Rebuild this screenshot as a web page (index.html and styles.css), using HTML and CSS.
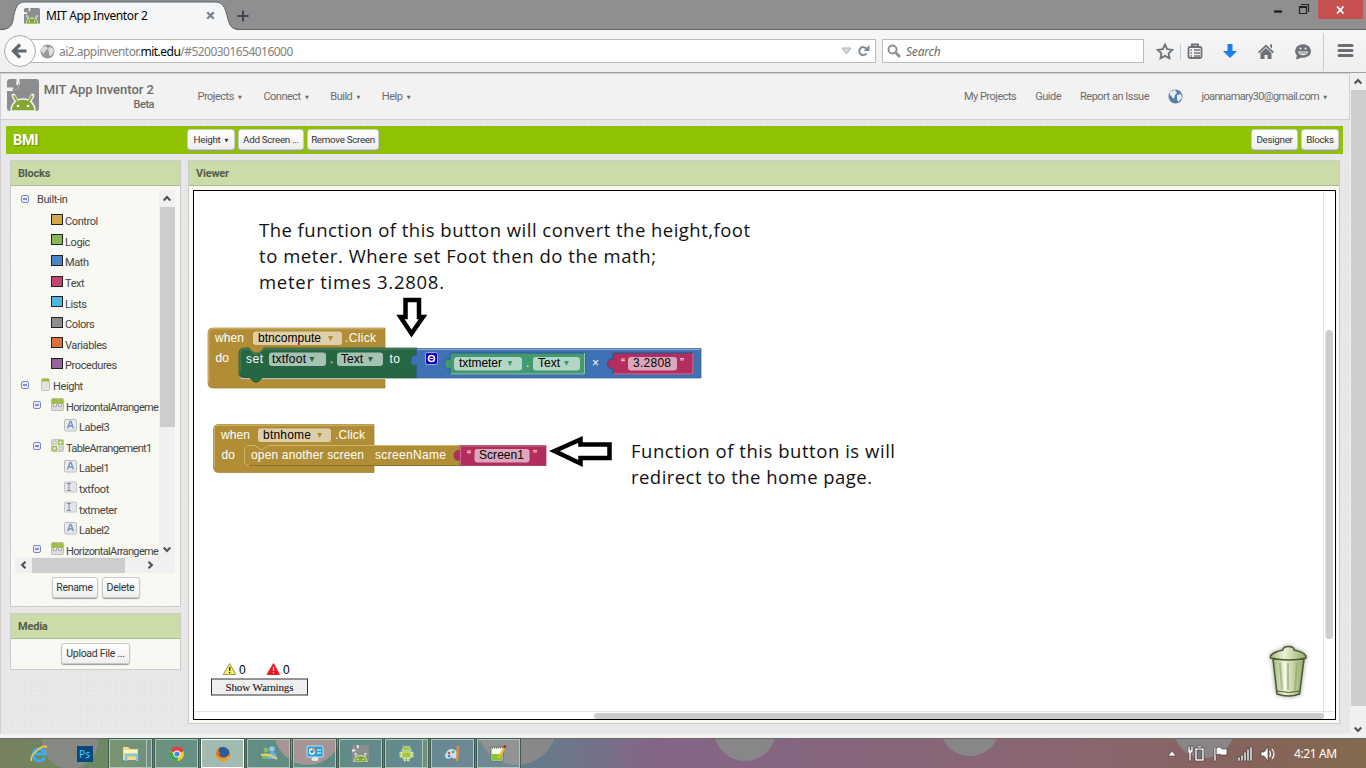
FILE: index.html
```html
<!DOCTYPE html>
<html lang="en">
<head>
<meta charset="utf-8">
<title>MIT App Inventor 2</title>
<link rel="stylesheet" href="styles.css">
</head>
<body>
<svg class="defs" width="0" height="0">
  <symbol id="logo" viewBox="0 0 32 32">
    <rect width="32" height="32" rx="3" fill="#8b8d8f"/>
    <path d="M0 8.500h3.500a2 2 0 1 1 0 3.500H0zM9.500 0v3a2 2 0 1 0 3 0V0z" fill="#f1f1f1"/>
    <path d="M5 10.500h6.500V4" stroke="#a4a6a7" fill="none"/>
    <path d="M9.500 22.500l-3-6M22.500 22.500l3-6" stroke="#f1f1f1" stroke-width="4" stroke-linecap="round"/>
    <path d="M4 32c0-7 5-12 12-12s12 5 12 12z" fill="#83a832" stroke="#f1f1f1" stroke-width="1.500"/>
    <path d="M10 22.500l-3.200-6M22 22.500l3.200-6" stroke="#83a832" stroke-width="1.800"/>
    <circle cx="11" cy="27" r="1.300" fill="#fff"/><circle cx="21" cy="27" r="1.300" fill="#fff"/>
  </symbol>
  <symbol id="minus" viewBox="0 0 8 8"><rect x=".5" y=".5" width="7" height="7" rx="1.500" fill="#eef0ff" stroke="#7a86c4"/><path d="M2 4h4" stroke="#4d55cf" stroke-width="1.300"/></symbol>
  <symbol id="harr" viewBox="0 0 13 13"><rect x=".5" y=".5" width="12" height="12" rx="1" fill="#ddd" stroke="#bbb"/><path d="M1 1h11v5H1z" fill="#9cc238"/><path d="M2.500 5.500h3v3h-3zM7.500 5.500h3v3h-3z" fill="#eee" stroke="#aaa"/></symbol>
  <symbol id="tarr" viewBox="0 0 13 13"><rect x=".5" y=".5" width="12" height="12" rx="1" fill="#e2e4dc" stroke="#c4c8ba"/><path d="M7 1h5v5H7zM1 7h5v5H1z" fill="#9cc238"/><path d="M2 2h3v3H2zM8 2h3v3H8zM2 8h3v3H2zM8 8h3v3H8z" fill="#f3f3f3" stroke="#aaa" stroke-width=".8"/></symbol>
  <symbol id="lab" viewBox="0 0 13 13"><rect x=".5" y=".5" width="12" height="11.500" rx="1.500" fill="#e8e9ec" stroke="#bbb"/><path d="M3.500 9.500l2.500-7h1l2.500 7M4.500 7h4" fill="none" stroke="#6d93c4" stroke-width="1.300"/></symbol>
  <symbol id="tbx" viewBox="0 0 13 13"><rect x=".5" y="1" width="12" height="10" rx="1" fill="#e4e5e6" stroke="#c5c5c5"/><path d="M3 2.500h4M3 9.500h4M5 2.500v7" fill="none" stroke="#7d8ba8"/></symbol>
  <symbol id="up" viewBox="0 0 16 16"><path d="M4.700 10L8 6.600 11.300 10" fill="none" stroke="#505050" stroke-width="2.100"/></symbol>
</svg>

<header class="tabbar">
  <svg class="tab-shape" width="250" height="31"><path d="M0 30C15 30 12 20 15 11C17 4 20 2 25 2H214C221 2 224 5 226 12C229 21 228 30 240 30V31H0z" fill="#f5f6f7"/><path d="M0 29.500C15 29.500 12 20 15 11C17 4 20 2 25 2H214C221 2 224 5 226 12C229 21 228 29.500 240 29.500H250" fill="none" stroke="#5c646c"/></svg>
  <div class="tab">
    <svg width="16" height="16"><use href="#logo"/></svg>
    <span class="tab-title">MIT App Inventor 2</span>
    <svg width="9" height="9"><path d="M1.200 1.200l6.600 6.600M7.800 1.200l-6.600 6.600" stroke="#76828f" stroke-width="2.200"/></svg>
  </div>
  <svg class="plus" width="12" height="12"><path d="M6 .5v11M.5 6h11" stroke="#3b4752" stroke-width="2"/></svg>
  <div class="window-controls">
    <svg width="40" height="19"><path d="M1 11.500h8" stroke="#222" stroke-width="2.400"/><path d="M26.500 6.500h7v7h-7zM28 4.500h7.500V12" fill="none" stroke="#222" stroke-width="1.200"/><path d="M26 7h8" stroke="#222" stroke-width="2"/></svg>
    <div class="close"><svg width="9" height="8"><path d="M1 .5l6.500 7M7.500 .5L1 7.500" stroke="#fff" stroke-width="1.800"/></svg></div>
  </div>
</header>

<nav class="toolbar">
  <div class="back"><svg width="18" height="16"><path d="M9 1.500L2.500 8 9 14.500M3 8H15.500" fill="none" stroke="#5f666c" stroke-width="3.200"/></svg></div>
  <div class="url">
    <svg width="15" height="15"><circle cx="7.500" cy="7.500" r="7" fill="#999"/><path d="M2 3l4-1 2 3-3 2-1 3-3-3zM9 3l4 1 1 4-3 4-2-1V8L8 6z" fill="#dedede"/></svg>
    <span class="address">ai2.appinventor.<b>mit.edu</b>/#5200301654016000</span>
    <svg class="url-icons" width="30" height="14"><path d="M1 4h9l-4.500 6z" fill="#d4dae0" stroke="#a6b0b9"/><path d="M25.500 9.500A4 4 0 1 1 25.300 4.500" fill="none" stroke="#7d8c99" stroke-width="2"/><path d="M28.500 1v6h-6z" fill="#7d8c99"/></svg>
  </div>
  <div class="search"><svg width="14" height="14"><circle cx="5.500" cy="5.500" r="4" fill="none" stroke="#8e8e8e" stroke-width="1.900"/><path d="M8.500 8.500l4.500 4.500" stroke="#8e8e8e" stroke-width="2.600"/></svg><i>Search</i></div>
  <svg class="tool-icons" width="209" height="42" fill="#6d7278">
    <path d="M16 14.500l2.200 4.700 5.100.6-3.700 3.500.9 5.100-4.500-2.500-4.500 2.500.9-5.100-3.700-3.500 5.100-.6z" fill="none" stroke="#6d7278" stroke-width="1.800"/>
    <path d="M31.500 14v16" stroke="#c5ced8"/>
    <rect x="39.500" y="17" width="13" height="11" rx="1.500" fill="#f4f4f4" stroke="#6d7278" stroke-width="1.800"/><path d="M43 16.500v-2h6v2" stroke="#6d7278" stroke-width="2" fill="none"/><path d="M41.500 20h1.500M45 20h6M41.500 23h1.500M45 23h6M41.500 26h1.500M45 26h6" stroke="#6d7278" stroke-width="1.500"/>
    <path d="M78.500 14h5v7H88l-7 7-7-7h4.500z" fill="#1880e8"/>
    <path d="M109 22l8-7.500 8 7.500-1.200 1.200L117 17l-6.800 6.200zM111.500 23l5.500-5 5.500 5v6h-4v-4h-3v4h-4zM121 14.500h2v4l-2-2z"/>
    <ellipse cx="154" cy="21" rx="8" ry="6.800"/><path d="M148 25l-1 4.500 6-2z"/><path d="M149 21.500c.7 5 9.300 5 10 0z" fill="#f4f4f4"/><path d="M150.500 23h7" stroke="#6d7278" stroke-width="1"/><circle cx="151.500" cy="18.500" r="1" fill="#f4f4f4"/><circle cx="156.500" cy="18.500" r="1" fill="#f4f4f4"/>
    <path d="M174.500 3v38" stroke="#c5ced8"/>
    <path d="M190 15.500h13M190 20.500h13M190 25.500h13" stroke="#6a6e73" stroke-width="3" stroke-linecap="round"/>
  </svg>
</nav>

<div class="viewport">
<main class="page">
  <div class="appbar">
    <svg class="applogo" width="32" height="32"><use href="#logo"/></svg>
    <div class="brand"><div class="brand-name">MIT App Inventor 2</div><div class="beta">Beta</div></div>
    <div class="menus"><span>Projects <em>▼</em></span><span>Connect <em>▼</em></span><span>Build <em>▼</em></span><span>Help <em>▼</em></span></div>
    <div class="links"><span>My Projects</span><span>Guide</span><span>Report an Issue</span><svg width="15" height="15"><circle cx="7.500" cy="7.500" r="7" fill="#5b7fa8"/><path d="M2 3l5-2 2 3-2 2-1 4-4-4zM9 6l4-1 1 4-4 4-1-3z" fill="#e5ebf2"/></svg><span class="mail">joannamary30@gmail.com <em>▼</em></span></div>
  </div>
  <div class="projectbar">
    <div class="project">BMI</div>
    <div class="btn b1">Height&nbsp;<em>▼</em></div><div class="btn b2">Add Screen ...</div><div class="btn b3">Remove Screen</div>
    <div class="btn b4">Designer</div><div class="btn b5">Blocks</div>
  </div>
  <div class="columns">
    <aside class="side">
      <section class="box blocks">
        <h2>Blocks</h2>
        <div class="tree-area">
          <div class="tree">
            <div class="row first"><svg width="8" height="8"><use href="#minus"/></svg><span class="root">Built-in</span></div>
            <div class="row leaf"><i class="sw gold"></i>Control</div>
            <div class="row leaf"><i class="sw green"></i>Logic</div>
            <div class="row leaf"><i class="sw blue"></i>Math</div>
            <div class="row leaf"><i class="sw pink"></i>Text</div>
            <div class="row leaf"><i class="sw sky"></i>Lists</div>
            <div class="row leaf"><i class="sw gray"></i>Colors</div>
            <div class="row leaf"><i class="sw orange"></i>Variables</div>
            <div class="row leaf"><i class="sw purple"></i>Procedures</div>
            <div class="row"><svg class="tog" width="8" height="8"><use href="#minus"/></svg><svg class="phone" width="9" height="13"><rect x=".5" y=".5" width="8" height="12" rx="1" fill="#e3e3e0" stroke="#c4c4c0"/><path d="M1 1h7v2.500H1z" fill="#9cbf3a"/></svg>Height</div>
            <div class="row in1"><svg class="tog" width="8" height="8"><use href="#minus"/></svg><svg class="ic" width="13" height="13"><use href="#harr"/></svg><span class="tight">HorizontalArrangeme</span></div>
            <div class="row in2"><svg class="ic" width="13" height="13"><use href="#lab"/></svg>Label3</div>
            <div class="row in1"><svg class="tog" width="8" height="8"><use href="#minus"/></svg><svg class="ic" width="13" height="13"><use href="#tarr"/></svg><span class="tight">TableArrangement1</span></div>
            <div class="row in2"><svg class="ic" width="13" height="13"><use href="#lab"/></svg>Label1</div>
            <div class="row in2"><svg class="ic" width="13" height="13"><use href="#tbx"/></svg>txtfoot</div>
            <div class="row in2"><svg class="ic" width="13" height="13"><use href="#tbx"/></svg>txtmeter</div>
            <div class="row in2"><svg class="ic" width="13" height="13"><use href="#lab"/></svg>Label2</div>
            <div class="row in1"><svg class="tog" width="8" height="8"><use href="#minus"/></svg><svg class="ic" width="13" height="13"><use href="#harr"/></svg><span class="tight">HorizontalArrangeme</span></div>
          </div>
          <div class="vbar"><svg width="16" height="17"><use href="#up"/></svg><div class="thumb tree-thumb"></div><svg class="down" width="16" height="17"><use href="#up"/></svg></div>
        </div>
        <div class="hbar"><svg class="left" width="17" height="16"><use href="#up"/></svg><div class="thumb wide"></div><svg class="right" width="17" height="16"><use href="#up"/></svg></div>
        <div class="actions"><div class="btn r1">Rename</div><div class="btn r2">Delete</div></div>
      </section>
      <section class="box media"><h2>Media</h2><div class="actions"><div class="btn r3">Upload File ...</div></div></section>
    </aside>
    <section class="box viewer">
      <h2>Viewer</h2>
      <svg class="canvas" width="1143" height="530" viewBox="193 190 1143 530">
        <rect x="193.500" y="190.500" width="1142" height="529" fill="#fff" stroke="#000"/>
        <path d="M1323.500 192V718M195 711.500H1334" stroke="#e4e4e4"/>
        <rect x="1325.500" y="330" width="7.500" height="309" rx="3.500" fill="#ccc"/><rect x="594" y="713" width="730" height="6" rx="3" fill="#ccc"/>
        <g class="note">
          <text x="259" y="237" textLength="491">The function of this button will convert the height,foot</text>
          <text x="259" y="263" textLength="397">to meter. Where set Foot then do the math;</text>
          <text x="259" y="289" textLength="185">meter times 3.2808.</text>
          <text x="631" y="458" textLength="264">Function of this button is will</text>
          <text x="631" y="484" textLength="241">redirect to the home page.</text>
        </g>
        <path d="M405.500 300h13.500v17h4L411.500 333.500 400.500 317h5z" fill="#fff" stroke="#000" stroke-width="4.500"/>
        <path d="M554.500 451L580.500 439.500v5h29V458h-29v5.500z" fill="#fff" stroke="#000" stroke-width="4.500"/>

        <path d="M208 333Q208 328 213 328H385V348H263L259 353H254L250 348H245Q239 348 239 353V374Q239 379.500 245 379.500H385V388H213Q208 388 208 383z" fill="#b18e35" stroke="#a08030" stroke-width=".7"/>
        <path d="M208.800 383V333Q209 328.800 213 328.800H384.500" fill="none" stroke="#d0b76d"/>
        <path d="M239 353Q239 348 245 348H249L254 353H259L264 348H417V378H262l-4 4h-4l-4-4h-5Q239 378 239 373z" fill="#266643" stroke="#1d5033" stroke-width=".7"/>
        <path d="M240 373V353Q240 349 245 349H249L254 354H259L264 349H417" fill="none" stroke="#5e8f72" stroke-width=".8"/>
        <path d="M416.500 348.500H701V378H416.500V364C412 368 411 362 411 360S413 354 416.500 356z" fill="#3f71b5" stroke="#315b94" stroke-width=".7"/>
        <path d="M417 349.500H700" stroke="#8aabd8"/>
        <rect x="425.500" y="352.500" width="12" height="12" rx="2" fill="#1100c4" stroke="#9caaf0"/><circle cx="431.500" cy="358.500" r="3" fill="none" stroke="#fff" stroke-width="1.600"/><path d="M430 358.500h3" stroke="#fff"/>
        <path d="M450 353H585V374.500H450V368C446 370 444.500 366 444.500 363.500S447 357 450 360z" fill="#439970" stroke="#2a5a91"/>
        <path d="M450.500 374H584.500V353" fill="none" stroke="#95c9b0"/>
        <path d="M613 353H693.500V374.500H613V368C609 370 607.500 366 607.500 363.500S610 357 613 360z" fill="#b32d5e" stroke="#264e87"/>
        <path d="M613.500 374H693V353" fill="none" stroke="#d5839f"/>
        <rect class="tan" x="253" y="331.500" width="89" height="13.500" rx="3"/><rect class="dark" x="269" y="352.500" width="57" height="13.500" rx="3"/><rect class="dark" x="337" y="352.500" width="46" height="13.500" rx="3"/>
        <rect class="mint" x="454" y="357" width="68" height="13.500" rx="3"/><rect class="mint" x="533" y="357" width="47" height="13.500" rx="3"/><rect class="rose" x="628" y="357" width="49" height="13.500" rx="3"/>
        <g class="code light">
          <text x="215" y="342" textLength="29">when</text><text x="345" y="342" textLength="31">.Click</text><text x="215.500" y="362" textLength="13.500">do</text><text x="246" y="363" textLength="17">set</text><text x="330" y="363">.</text><text x="389.500" y="363" textLength="10.500">to</text><text x="526" y="367">.</text><text x="592" y="367">×</text><text x="621" y="367">“</text><text x="680" y="367">”</text>
        </g>
        <g class="code">
          <text x="258" y="342" textLength="63">btncompute</text><text x="272" y="363" textLength="34">txtfoot</text><text x="341" y="363" textLength="22">Text</text><text x="459" y="367" textLength="43">txtmeter</text><text x="538" y="367" textLength="22">Text</text><text x="633" y="367" textLength="38">3.2808</text>
        </g>
        <path d="M328 336h5l-2.500 5z" fill="#b18e35"/><path d="M309.500 357h5l-2.500 5zM368 357h5l-2.500 5z" fill="#266643"/><path d="M507.500 361h5l-2.500 5zM564 361h5l-2.500 5z" fill="#439970"/>

        <path d="M213.500 430Q213.500 424.500 219 424.500H374V472.500H219Q213.500 472.500 213.500 467z" fill="#b18e35" stroke="#a08030" stroke-width=".7"/>
        <path d="M214.300 467V430Q214.500 425.300 219 425.300H373.500" fill="none" stroke="#d0b76d"/>
        <path d="M244.500 450Q244.500 445.500 249 445.500H255l5 4h3l5-4H460V465.500H249Q244.500 465.500 244.500 461z" fill="#b18e35"/>
        <path d="M460 465.500H249Q244.500 465.500 244.500 461V450Q244.500 445.500 249 445.500H255l5 4h3l5-4H460" fill="none" stroke="#cdb56e"/><path d="M460 465.500H249" stroke="#8c6f29"/>
        <path d="M460 445.500H546V465.500H460V459C455 463 454 456 454 454.500S456 449 460 451z" fill="#b32d5e" stroke="#97284f" stroke-width=".7"/>
        <path d="M460.500 465V446H546" fill="none" stroke="#d07c99" stroke-width=".8"/>
        <rect class="tan" x="258" y="428.500" width="73" height="13.500" rx="3"/><rect class="rose" x="474.500" y="449" width="55" height="13.500" rx="3"/>
        <g class="code light"><text x="221" y="439" textLength="29">when</text><text x="335" y="439" textLength="30">.Click</text><text x="221.500" y="459" textLength="13.500">do</text><text x="251" y="459" textLength="113">open another screen</text><text x="375" y="459" textLength="71">screenName</text><text x="467" y="459">“</text><text x="533" y="459">”</text></g>
        <g class="code"><text x="263" y="439" textLength="48">btnhome</text><text x="479" y="459" textLength="45">Screen1</text></g>
        <path d="M317 433h5l-2.500 5z" fill="#b18e35"/>

        <path d="M229.700 663.500l6 11h-12.500z" fill="#f5f06a" stroke="#9a9840"/><path d="M229.700 667v4M229.700 672v1.300" stroke="#222" stroke-width="1.300"/>
        <path d="M273.500 663.500l6 11h-12.500z" fill="#f60c18" stroke="#e03030"/><path d="M273.500 667v4M273.500 672v1.300" stroke="#fff" stroke-width="1.300"/>
        <text class="count" x="239" y="674">0</text><text class="count" x="283" y="674">0</text>
        <rect x="211.500" y="679" width="96" height="16" fill="#efefef" stroke="#333"/><text class="warn" x="225.500" y="691" textLength="68">Show Warnings</text>
        <g class="trash">
          <path d="M1273 659h31l-4.500 35Q1289 698 1277 694z" fill="url(#can)" stroke="#4c5a33" stroke-width="1.500"/>
          <path d="M1270.500 656Q1273 652 1283 650Q1283 646.500 1288.500 646.500T1294 650Q1304 652 1306 656V658Q1289 662 1270.500 658z" fill="url(#can)" stroke="#4c5a33" stroke-width="1.500"/>
          <path d="M1280 663l2 27M1288 663v27M1297 663l-2 27" stroke="#8fa468" stroke-width="2" opacity=".6"/><path d="M1284.500 663l1 27" stroke="#f7fae9" stroke-width="2"/><path d="M1277 691q12 3 23 0" fill="none" stroke="#4c5a33"/>
        </g>
        <defs><linearGradient id="can"><stop offset="0" stop-color="#a3b87c"/><stop offset=".38" stop-color="#edf2d8"/><stop offset="1" stop-color="#93aa68"/></linearGradient></defs>
      </svg>
    </section>
  </div>
</main>
<div class="vbar page-scroll"><svg width="16" height="17"><use href="#up"/></svg><div class="thumb page-thumb"></div><svg class="down" width="16" height="17"><use href="#up"/></svg></div>
</div>

<footer class="taskbar">
  <svg class="bubbles" width="1366" height="30"><g fill="#898989" fill-opacity=".9"><circle cx="70" cy="2" r="28"/><circle cx="745" cy="-9" r="31"/><circle cx="970" cy="-13" r="30"/><circle cx="1204" cy="-12" r="31"/><circle cx="517" cy="-14" r="40"/><circle cx="308" cy="-8" r="34" fill="#a58b8b"/></g></svg>
  <div class="task bare"><svg width="18" height="18"><path d="M14.500 12.500A6 6 0 1 1 15 9H5" fill="none" stroke="#3eaeea" stroke-width="3"/><path d="M1.500 16C-1 11 12-1 17 2" fill="none" stroke="#f4cc45" stroke-width="1.600"/></svg></div>
  <div class="task bare"><div class="ps">Ps</div></div>
  <div class="task multi"><svg width="18" height="16"><path d="M1 1h5l2 2h8v11H1z" fill="#f3dc83"/><path d="M2 4h13v3H2z" fill="#fff6c4"/><path d="M4 15V9h11v6" fill="none" stroke="#82c5e8" stroke-width="2.500"/></svg></div>
  <div class="task"><svg width="16" height="16"><circle cx="8" cy="8" r="7" fill="#f7c928"/><path d="M8 8L1.500 5A7 7 0 0 1 14.500 5z" fill="#db4437"/><path d="M1.600 5A7 7 0 0 0 8 15l2-5-5-1z" fill="#36a853"/><circle cx="8" cy="8" r="3.500" fill="#fff"/><circle cx="8" cy="8" r="2.600" fill="#4486ee"/></svg></div>
  <div class="task active"><svg width="16" height="16"><circle cx="8" cy="8" r="7" fill="#e56a20"/><path d="M4 2Q10-1 14 5Q15 9 11 11Q5 12 4 8l2-1-2-1z" fill="#235d9e"/><path d="M1 5q1 8 8 7 4-1 4-3 3 2-1 5-5 3-9-1Q1 10 1 5z" fill="#f49a27"/></svg></div>
  <div class="task"><svg width="18" height="18"><circle cx="6" cy="5" r="2.500" fill="#86bd65"/><circle cx="12" cy="4" r="2.800" fill="#8cc9f0"/><path d="M2 14q0-7 5-6 4 0 5 6z" fill="#7cba5f"/><path d="M8 14q0-8 5-7 4 1 4 7z" fill="#6ab4e8"/><path d="M1 10q9-1 16 4" stroke="#f0cb67" stroke-width="2" fill="none"/></svg></div>
  <div class="task"><svg width="18" height="17"><rect x="1" y="1" width="16" height="11" rx="1" fill="#319adc" stroke="#b9e4f8"/><circle cx="6" cy="6.500" r="2.500" fill="none" stroke="#fff" stroke-width="1.300"/><path d="M6 4a2.500 2.500 0 0 1 2.500 2.500" stroke="#ef9a30" fill="none" stroke-width="1.400"/><path d="M11 5h4M11 8h4" stroke="#fff"/><ellipse cx="9" cy="14" rx="3.500" ry="2" fill="#e4e6e6"/></svg></div>
  <div class="task"><svg width="17" height="17"><use href="#logo"/></svg></div>
  <div class="task multi"><svg width="15" height="17" fill="#a2c73e" stroke="#e6efd1" stroke-width=".7"><path d="M3 6a4.500 4.500 0 0 1 9 0zM3 7h9v6H3zM1 7h1.500v5H1zM12.500 7H14v5h-1.500zM5 13h1.700v3H5zM8.500 13h1.700v3H8.500zM5 2L4 .5M10 2l1-1.500"/></svg></div>
  <div class="task"><svg width="17" height="17"><path d="M2 8Q5 2 11 5q5 4 1 8-3 2-4-1-3 3-6 1-2-2 0-5z" fill="#c6dff0"/><circle cx="5" cy="8" r="1.300" fill="#e14d35"/><circle cx="9" cy="7" r="1.300" fill="#58a648"/><circle cx="5" cy="11" r="1.300" fill="#4f78c7"/><path d="M14 1l-1 15" stroke="#dc9145" stroke-width="2.400"/></svg></div>
  <div class="task"><svg width="17" height="17"><path d="M1 2h12v14H1z" fill="#f6fcee" stroke="#637055"/><path d="M2 9h10v6H2z" fill="#82c72f"/><path d="M2 3h10" stroke="#444" stroke-dasharray="1 1"/><path d="M15 2L9 12l-1 1" stroke="#e9be2b" stroke-width="2.400"/><path d="M14 3l1.500-2.500" stroke="#b12a22" stroke-width="2.600"/></svg></div>
  <svg class="tray" width="112" height="22" fill="#fff" stroke="#333" stroke-width=".6"><path d="M1 13h8L5 8z"/><path d="M28 5h9v13h-9zM30 3h5v2h-5zM21 3h2v4h1V3h2v6l-2 1v8h-2v-8l-1-1z"/><path d="M30 7h5v9h-5z" fill="#787878"/><path d="M47 4h2v14h-2zM49 5q3-2 5 0l1 1h5v6h-6q-2-2-5 0z"/><path d="M71 14h2v4h-2zM74 12h2v6h-2zM77 9h2v9h-2zM80 6h2v12h-2zM83 4h2v14h-2z"/><path d="M94 9h3l4-5v14l-4-5h-3z"/><path d="M102.500 8q2 3 0 6M105 6q4 5 0 10" fill="none" stroke="#fff" stroke-width="1.200"/></svg>
  <time>4:21 AM</time>
</footer>
</body>
</html>
```
FILE: styles.css
```css
*{box-sizing:border-box}
body{margin:0;width:1366px;height:768px;overflow:hidden;display:flex;flex-direction:column;font-family:Roboto,"Liberation Sans",sans-serif;font-size:11px;color:#444;background:#f2f2f2}
svg{display:block;flex:none}
.defs{position:absolute}
em{font-style:normal;font-family:"DejaVu Sans",sans-serif;font-size:5px;letter-spacing:0;vertical-align:1px;margin-left:2px}
.tabbar{height:30px;flex:none;background:#8f8f8f;border-bottom:1px solid #5c646c;display:flex;position:relative}
.tab-shape{position:absolute;left:0;top:0}
.tab{position:relative;width:236px;height:31px;padding:0 21px 0 24px;display:flex;align-items:center;font-family:"Noto Sans",sans-serif;font-size:12px;color:#000}
.tab-title{margin-left:6px;flex:1;letter-spacing:-.4px;white-space:nowrap}
.plus{margin:10px 0 0 1px}
.window-controls{margin-left:auto;display:flex;margin-right:3px}
.window-controls>svg{margin-right:5px}
.close{width:45px;height:19px;background:#c75050;display:flex;align-items:center;justify-content:center}
.toolbar{height:43px;flex:none;background:linear-gradient(#f6f6f6,#efefef);border-bottom:1px solid #a0a0a0;display:flex;align-items:center;font-family:"Noto Sans",sans-serif}
.back{width:32px;height:32px;border:1px solid #aaa;border-radius:50%;margin-left:4px;background:#fafafa;display:flex;align-items:center;justify-content:center;position:relative;z-index:1}
.url{width:848px;height:24px;background:#fff;border:1px solid #b5bdc5;margin-left:-8px;padding-left:11px;display:flex;align-items:center;font-size:12px;color:#808080}
.address{margin-left:4px;letter-spacing:-.53px;white-space:nowrap}
.address b{font-weight:400;color:#000}
.url-icons{margin-left:auto;margin-right:4px}
.search{width:262px;height:24px;margin-left:6px;background:#fff;border:1px solid #b5bdc5;display:flex;align-items:center;padding-left:4px;font-size:12px;color:#6b6b6b}
.search i{margin-left:5px;letter-spacing:-.2px}
.tool-icons{margin-left:5px}
.viewport{height:665px;flex:none;display:flex}
.page{width:1350px;height:661px;background-color:#e7e7e7;background-image:radial-gradient(#e2e2e2 1px,transparent 1px),radial-gradient(#ebebeb 1px,transparent 1px);background-size:7px 5px,5px 7px;border-left:1px solid #d0d0d0}
.appbar{height:47px;background:#f2f2f2;border:1px solid #cfcfcf;border-left:0;display:flex;color:#6c6c6c;letter-spacing:-.5px}
.applogo{margin:5px 0 0 6px}
.brand{width:111px;margin:8px 0 0 4px;text-align:right;font-weight:500}
.brand-name{font-size:13px;line-height:16px;letter-spacing:0;white-space:nowrap}
.beta{font-size:11px;line-height:14px}
.menus{display:flex;gap:21.5px;margin:16px 0 0 43.5px;line-height:14px}
.links{display:flex;gap:19px;margin:16px 22px 0 auto;line-height:14px}
.links span:nth-child(-n+3){position:relative;left:2.500px}
.links>svg{margin:-1px -.5px 0 2.500px}
.mail{letter-spacing:-.64px}
.projectbar{height:28px;width:1337px;background:#8fc202;margin:6px 0 6px 5px;display:flex;align-items:center;padding:0 4px 1px 7px}
.project{width:174px;color:#fff;font-weight:700;font-size:14.5px;padding-top:2px;letter-spacing:-.3px;text-shadow:1px 1px 1px #6b9100}
.btn{height:21px;border:1px solid #c9c9c9;border-radius:3px;background:linear-gradient(#fff,#efefef);box-shadow:0 1px 1px #999;display:flex;align-items:center;justify-content:center;font-size:10.5px;color:#333;letter-spacing:-.3px;white-space:nowrap}
.projectbar .btn{margin-right:3px;font-size:9.800px;letter-spacing:-.3px}
.b1{width:48px}.b2{width:66px}.b3{width:72px}.b4{width:47px;margin-left:auto}.b5{width:38px}
.projectbar .b5{margin-right:0}
.columns{display:flex;gap:7px;padding-left:9px}
.side{width:171px}
.box{border:1px solid #ccc;background:#f8f9f2}
.box h2{margin:0;height:25px;background:#cbdca8;border-bottom:1px solid #adbb95;font-size:11px;font-weight:700;line-height:25px;padding-left:7px;color:#535c4a;letter-spacing:-.2px}
.blocks{height:447px;margin-bottom:6px}
.media{height:57px}
.tree-area{height:372px;padding:4px 5px 0 4px;display:flex}
.tree{width:144px;height:368px;overflow:hidden;letter-spacing:-.4px;color:#444}
.tight{letter-spacing:-.64px}
.row{height:20.6px;display:flex;align-items:center;padding-left:6px;white-space:nowrap}
.row.first{height:19px;margin-bottom:2.500px;padding-bottom:1px}
.root{margin-left:8px}
.leaf{padding-left:35px}
.sw{width:12px;height:11px;border:1px solid #222;margin:-5px 2px 0 1px}
.gold{background:#d0a94a}.green{background:#82b855}.blue{background:#4a85c5}.pink{background:#c44372}.sky{background:#52b5df}.gray{background:#8e8e8e}.orange{background:#dc713a}.purple{background:#926498}
.tog{margin-top:-4px}
.phone{margin:-5px 3px 0 12px}
.in1{padding-left:18px}
.in1 .ic{margin:-5px 2px 0 10px}
.in2{padding-left:49px}
.ic{margin:-5px 2px 0 0}
.vbar{width:16px;background:#f0f0f0;display:flex;flex-direction:column;align-items:center}
.thumb{background:#cdcdcd}
.tree-thumb{width:15px;height:220px}
.down{margin-top:auto;transform:rotate(180deg)}
.hbar{height:16px;width:160px;margin:-1px 0 0 4px;background:#f0f0f0;display:flex;align-items:center}
.wide{width:93px;height:15px}
.left{transform:rotate(-90deg)}
.right{transform:rotate(90deg);margin-left:auto;margin-right:16px}
.actions{display:flex;justify-content:center;gap:4px;padding-top:4px}
.r1{width:46px}.r2{width:38px}.r3{width:69px}
.viewer{width:1152px;height:564px}
.viewer .canvas{margin:4px 0 0 4px}
.page-scroll{background:#f0f0f0}
.page-thumb{width:15px;height:616px}
.note{font:18.5px "Open Sans","Noto Sans",sans-serif;font-variant-ligatures:none;fill:#111}
.code{font:12px "Liberation Sans",sans-serif;fill:#000}
.light{fill:#fff}
.tan{fill:#dfcfa9}.dark{fill:#a5c2b2}.mint{fill:#b4d6c6}.rose{fill:#dda8bd}
.count{font:12px "Liberation Sans",sans-serif}
.warn{font:11px "Liberation Serif",serif}
.trash{filter:drop-shadow(0 0 2px #999)}
.taskbar{height:30px;flex:none;position:relative;display:flex;align-items:center;gap:3px;padding-left:17px;border-top:1px solid #696969;background:linear-gradient(90deg,#76805f 0,#6c8963 110px,#548579 190px,#4e7f79 330px,#587d88 430px,#687a8a 550px,#836687 650px,#87667a 900px,#8b6670 1080px,#85635a 1260px,#836b4e 1366px)}
.bubbles{position:absolute;left:0;top:0}
.task{position:relative;width:43px;height:29px;border:1px solid #b1c5b9;outline:1px solid #405a50;background:#ffffff18;display:flex;align-items:center;justify-content:center}
.bare{border:0;outline:0;background:none}
.task.multi{box-shadow:inset -4px 0 #718f80,inset -5px 0 #b1c5b9}
.task.active{background:#a1bbb0;border-color:#fff}
.ps{width:16px;height:16px;background:#06497d;color:#5ac4f5;font:10px/16px "Noto Sans",sans-serif;text-align:center}
.tray{position:relative;margin-left:auto;margin-right:3px}
time{position:relative;width:65px;padding-left:12px;font:12px "Noto Sans",sans-serif;color:#fff;letter-spacing:-.4px;white-space:nowrap;margin-right:19px}
.tray + time{margin-left:-3px}
```
